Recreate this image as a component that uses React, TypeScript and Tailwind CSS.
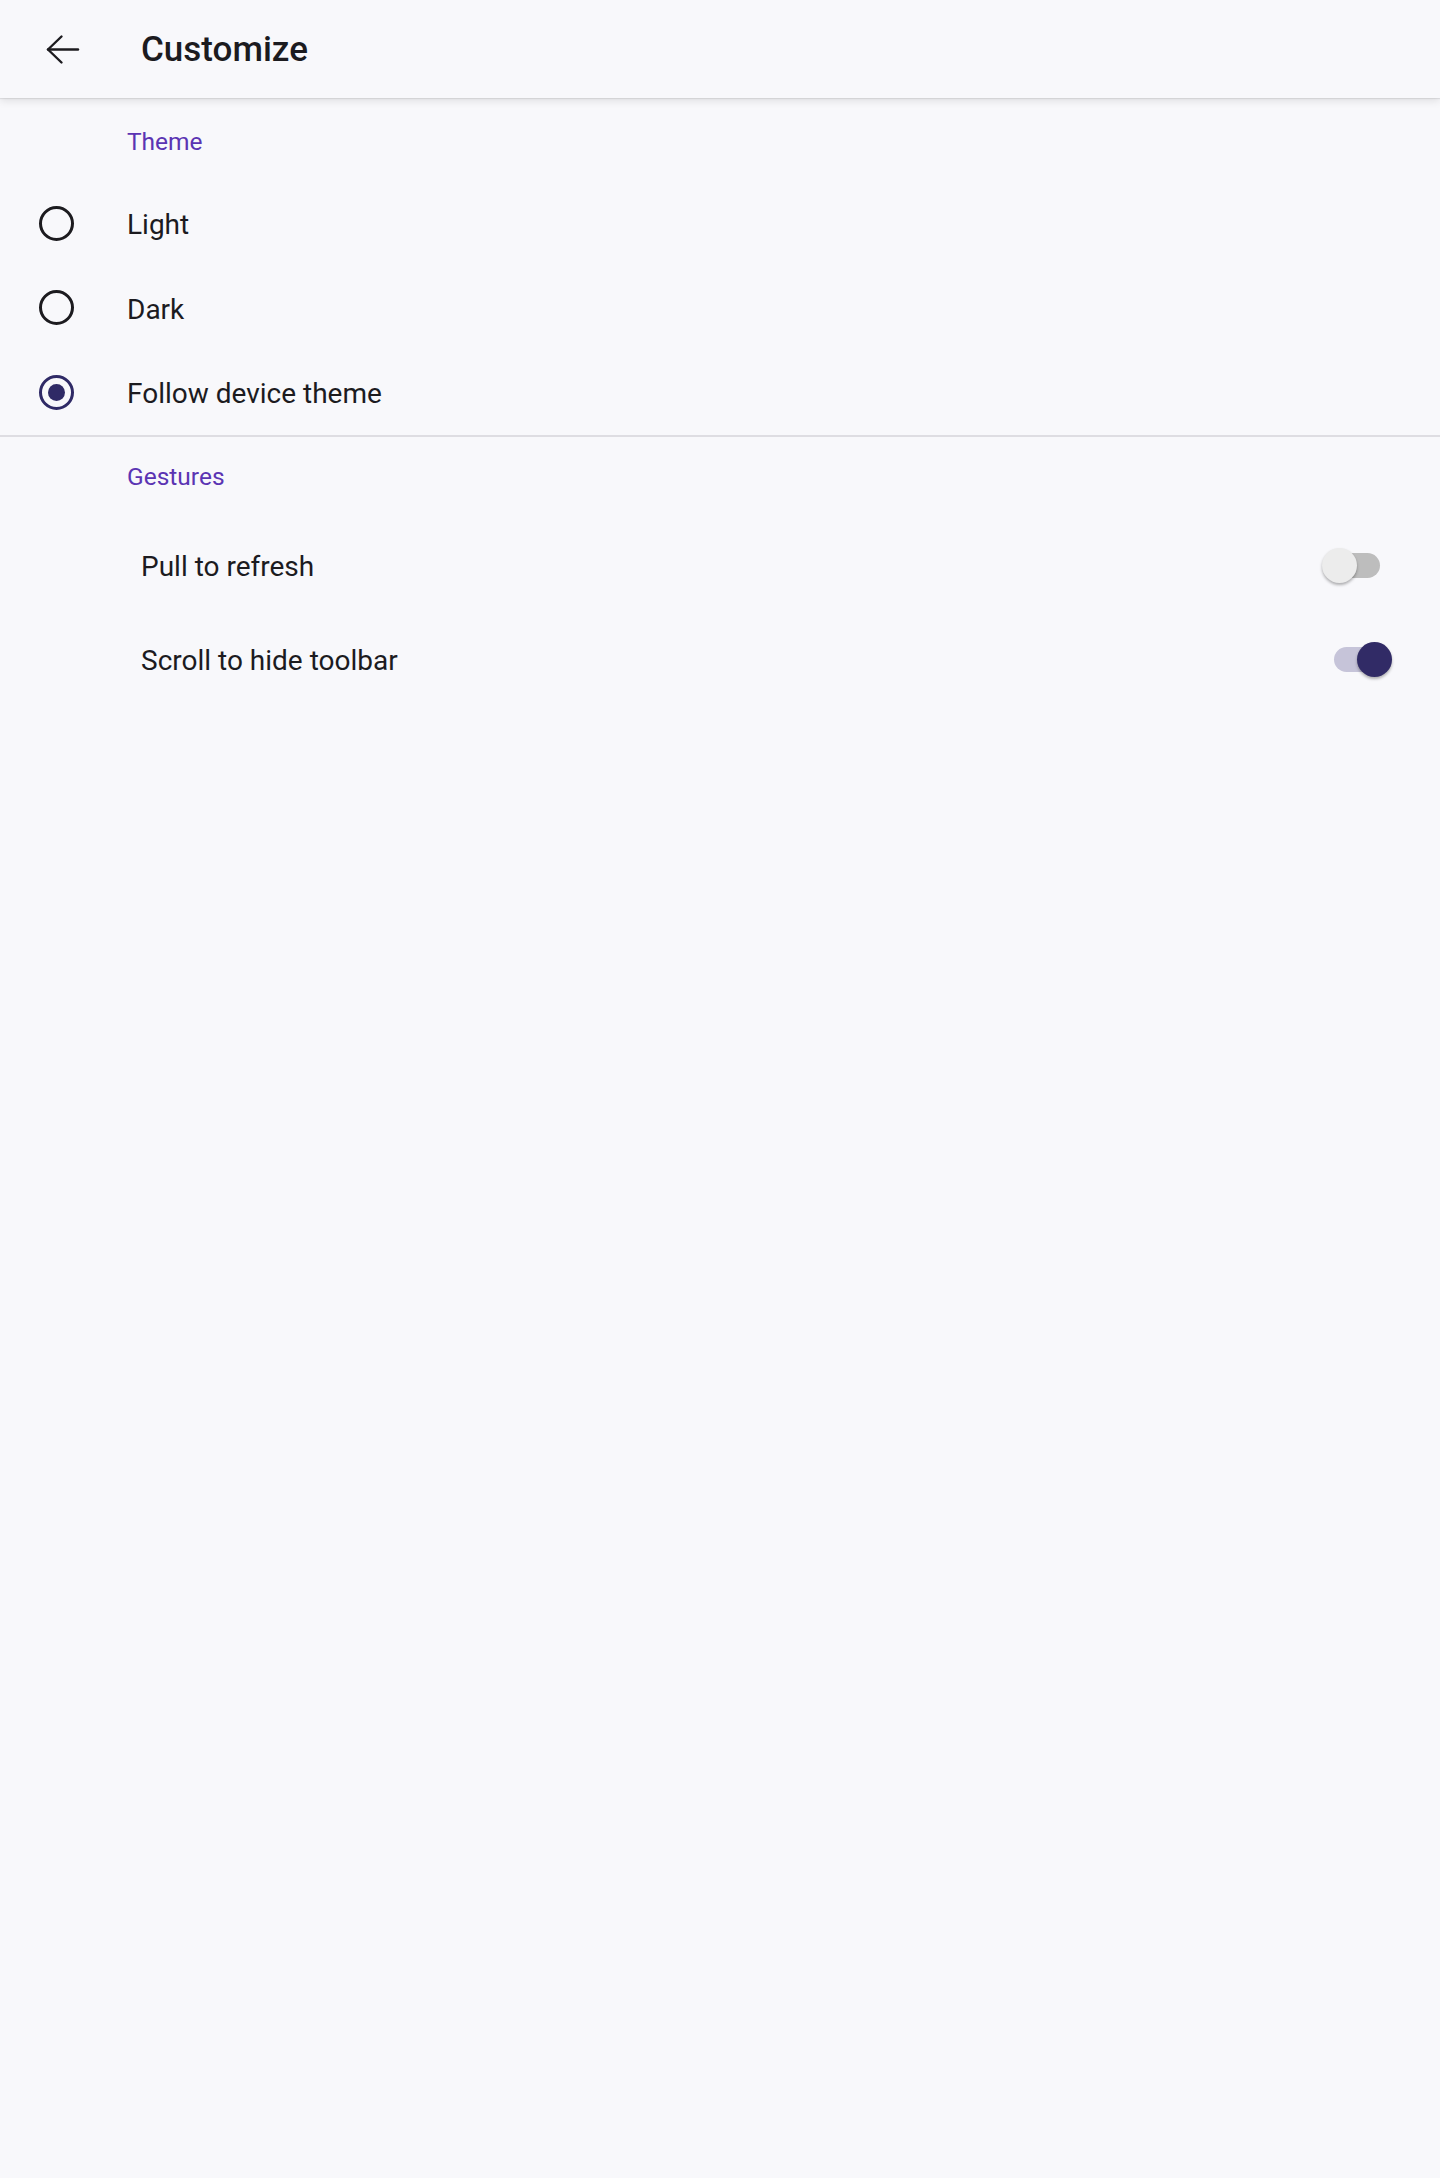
import React, { useState } from "react";

type Theme = "light" | "dark" | "system";

const themes: { id: Theme; label: string }[] = [
  { id: "light", label: "Light" },
  { id: "dark", label: "Dark" },
  { id: "system", label: "Follow device theme" },
];

// thin back arrow, drawn in a 42px box
const BackArrow = () => (
  <svg
    viewBox="0 0 42 42"
    className="h-[42px] w-[42px]"
    fill="none"
    stroke="#1c1b1f"
    strokeWidth={2.4}
    strokeLinecap="round"
    strokeLinejoin="round"
  >
    <path d="M6 21.5H36" />
    <path d="M19.5 8.5L6 21.5L19.5 34.5" />
  </svg>
);

const Radio = ({ checked }: { checked: boolean }) => (
  <div
    className={`flex h-[35px] w-[35px] items-center justify-center rounded-full border-[3.5px] ${
      checked ? "border-[#2f2a66]" : "border-[#1c1b1f]"
    }`}
  >
    {checked && <div className="h-[17px] w-[17px] rounded-full bg-[#2f2a66]" />}
  </div>
);

const Switch = ({ on, onToggle }: { on: boolean; onToggle: () => void }) => (
  <button
    type="button"
    onClick={onToggle}
    className="relative mb-[2px] flex h-[40px] w-[70px] shrink-0 items-center"
  >
    <div
      className={`mx-[12px] h-[25px] w-[46px] rounded-full ${
        on ? "bg-[#c6c4d9]" : "bg-[#bdbdbd]"
      }`}
    />
    <div
      className={`absolute top-[2px] h-[35px] w-[35px] rounded-full shadow-[0_2px_3px_rgba(0,0,0,0.3)] ${
        on ? "left-[35px] bg-[#312b66]" : "left-0 bg-[#ececec]"
      }`}
    />
  </button>
);

const Category = ({ title, top }: { title: string; top: string }) => (
  <div className={`h-[83px] pl-[127px] ${top}`}>
    <p className="text-[24.5px] leading-[29px] text-[#5b34b3]">{title}</p>
  </div>
);

export default function App() {
  const [theme, setTheme] = useState<Theme>("system");
  const [pull, setPull] = useState(false);
  const [hideToolbar, setHideToolbar] = useState(true);

  return (
    <div
      className="min-h-[2178px] bg-[#f8f8fb] text-[#1c1b1f]"
      style={{ fontFamily: "Roboto, 'Noto Sans', sans-serif" }}
    >
      <header className="relative z-10 flex h-[98px] items-center bg-[#f8f8fb] shadow-[0_1px_1px_rgba(0,0,0,0.08),0_3px_8px_rgba(0,0,0,0.1)]">
        <button type="button" className="ml-[42px] flex items-center">
          <BackArrow />
        </button>
        <h1 className="ml-[57px] text-[35px] font-medium leading-none">Customize</h1>
      </header>

      <section>
        <Category title="Theme" top="pt-[29px]" />
        {themes.map((t) => (
          <button
            key={t.id}
            type="button"
            onClick={() => setTheme(t.id)}
            className="flex h-[84.5px] w-full items-center text-left"
          >
            <div className="ml-[39px] w-[88px]">
              <Radio checked={theme === t.id} />
            </div>
            <span className="pt-[3px] text-[28px] leading-[33px]">{t.label}</span>
          </button>
        ))}
      </section>

      <div className="h-[2px] bg-[#dedde2]" />

      <section>
        <Category title="Gestures" top="pt-[25px]" />
        <div className="flex h-[94px] items-center pl-[141px] pr-[48px]">
          <span className="grow text-[28px] leading-[33px]">Pull to refresh</span>
          <Switch on={pull} onToggle={() => setPull(!pull)} />
        </div>
        <div className="flex h-[94px] items-center pl-[141px] pr-[48px]">
          <span className="grow text-[28px] leading-[33px]">Scroll to hide toolbar</span>
          <Switch on={hideToolbar} onToggle={() => setHideToolbar(!hideToolbar)} />
        </div>
      </section>
    </div>
  );
}
